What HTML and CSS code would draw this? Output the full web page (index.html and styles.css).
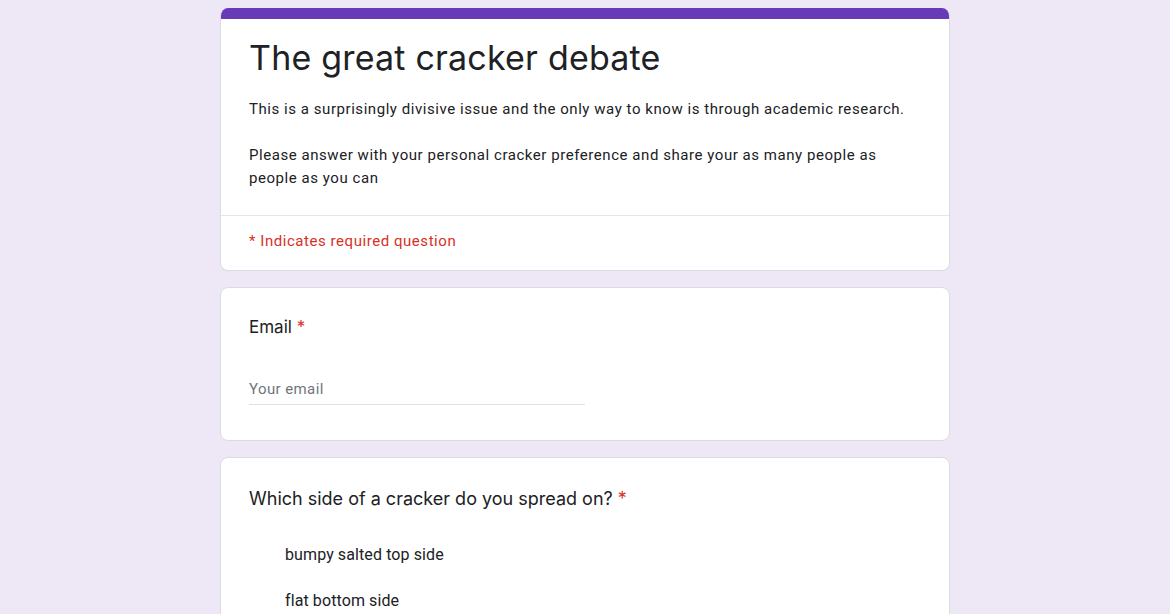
FILE: index.html
```html
<!DOCTYPE html>
<html>
<head>
<meta charset="utf-8">
<link rel="stylesheet" href="styles.css">
</head>
<body>
<main class="form">
  <section class="card header-card">
    <div class="accent"></div>
    <div class="header-body">
      <h1 class="title">The great cracker debate</h1>
      <p class="desc">This is a surprisingly divisive issue and the only way to know is through academic research.</p>
      <p class="desc">Please answer with your personal cracker preference and share your as many people as people as you can</p>
    </div>
    <div class="required-note">* Indicates required question</div>
  </section>

  <section class="card question">
    <div class="q-title">Email <span class="star">*</span></div>
    <div class="input">Your email</div>
  </section>

  <section class="card question">
    <div class="q-title">Which side of a cracker do you spread on? <span class="star">*</span></div>
    <div class="options">
      <div class="option">bumpy salted top side</div>
      <div class="option">flat bottom side</div>
    </div>
  </section>
</main>
</body>
</html>
```

FILE: styles.css
```css
html, body {
  margin: 0;
  padding: 0;
  background: #ede7f6;
  height: 100%;
  overflow: hidden;
}
body {
  font-family: Roboto, "Liberation Sans", sans-serif;
  color: #202124;
}
.form {
  width: 730px;
  margin: 8px auto 0;
  display: flex;
  flex-direction: column;
  gap: 16px;
}
.card {
  background: #fff;
  border: 1px solid #dadce0;
  border-radius: 8px;
  overflow: hidden;
}
.header-card {
  border-top: none;
}
.accent {
  height: 11px;
  background: #673ab7;
}
.header-body {
  padding: 18px 28px 25px;
  border-bottom: 1px solid #e6e6e6;
}
.title {
  margin: 0 0 19px;
  font-family: Inter, "Open Sans", Roboto, sans-serif;
  font-weight: 400;
  font-size: 34px;
  line-height: 42px;
  letter-spacing: 0.2px;
  color: #202124;
}
.desc {
  margin: 0;
  font-size: 15px;
  line-height: 23px;
  letter-spacing: 0.55px;
  color: #202124;
}
.desc + .desc {
  margin-top: 23px;
}
.required-note {
  padding: 15px 28px 19px;
  font-size: 15px;
  line-height: 20px;
  color: #d93025;
  letter-spacing: 0.55px;
}
.question {
  padding: 27px 28px 35px;
}
.question + .question {
  padding-top: 29px;
}
.q-title {
  font-family: Inter, "Open Sans", Roboto, sans-serif;
  font-size: 17px;
  line-height: 24px;
  color: #202124;
}
.question + .question .q-title {
  font-size: 18px;
}
.star {
  color: #d93025;
}
.input {
  margin-top: 40px;
  width: 336px;
  padding-bottom: 5px;
  border-bottom: 1px solid #e0e0e0;
  font-size: 15px;
  line-height: 20px;
  color: #70757a;
  letter-spacing: 0.4px;
}
.options {
  margin-top: 34px;
  padding-left: 36px;
  display: flex;
  flex-direction: column;
  gap: 26px;
}
.option {
  font-size: 16px;
  line-height: 20px;
  letter-spacing: 0.1px;
}
```
